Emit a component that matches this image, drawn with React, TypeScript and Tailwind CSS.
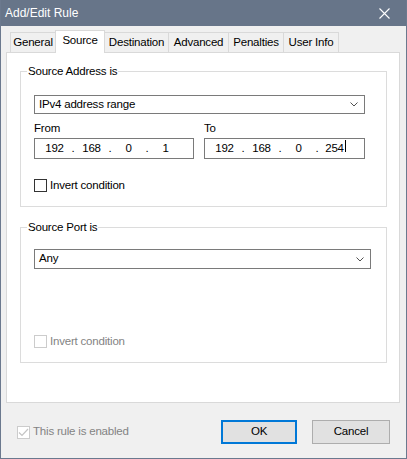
import React from "react";

const font = { fontFamily: '"Liberation Sans", Arial, sans-serif' };

function Chevron() {
  return (
    <svg width="8" height="5" viewBox="0 0 8 5" className="shrink-0">
      <polyline points="0.5,0.5 4,4 7.5,0.5" fill="none" stroke="#505050" strokeWidth="1" />
    </svg>
  );
}

function Select({ value, className }: { value: string; className: string }) {
  return (
    <div className={`flex items-center justify-between border border-[#7a7a7a] bg-white pl-[4px] pr-[6px] ${className}`}>
      <span className="leading-none">{value}</span>
      <Chevron />
    </div>
  );
}

function IpBox({ parts, caret, className }: { parts: string[]; caret?: boolean; className: string }) {
  return (
    <div className={`flex h-[21px] items-center border border-[#7a7a7a] bg-white pl-[3px] ${className}`}>
      {parts.map((p, i) => (
        <React.Fragment key={i}>
          {i > 0 && <span className="w-[4px] text-center">.</span>}
          <span className="relative flex w-[33px] justify-center">
            {p}
            {caret && i === parts.length - 1 && (
              <span className="ml-[1px] inline-block h-[12px] w-px bg-black" />
            )}
          </span>
        </React.Fragment>
      ))}
    </div>
  );
}

function Checkbox({ label, disabled, checked }: { label: string; disabled?: boolean; checked?: boolean }) {
  return (
    <div className="flex items-center">
      <span
        className={`flex h-[13px] w-[13px] items-center justify-center border bg-white ${
          disabled ? "border-[#cccccc]" : "border-[#333333]"
        }`}
      >
        {checked && (
          <svg width="11" height="9" viewBox="0 0 11 9">
            <polyline points="1,4.5 4,7.5 10,1" fill="none" stroke="#c4c4c4" strokeWidth="1.2" />
          </svg>
        )}
      </span>
      <span className={`ml-[3px] leading-none ${disabled ? "text-[#838383]" : "text-black"}`}>{label}</span>
    </div>
  );
}

const tabs = [
  { name: "General", w: "w-[46px]" },
  { name: "Source", w: "w-[50px]", active: true },
  { name: "Destination", w: "w-[65px]" },
  { name: "Advanced", w: "w-[61px]" },
  { name: "Penalties", w: "w-[56px]" },
  { name: "User Info", w: "w-[56px]" },
];

export default function App() {
  return (
    <div
      style={font}
      className="flex h-[459px] w-[407px] flex-col border-x border-b border-[#6b798e] bg-[#f0f0f0] text-[11.5px] tracking-[-0.2px] text-black"
    >
      {/* Title bar */}
      <div className="flex h-[26px] shrink-0 items-center justify-between bg-[#677589] pl-[4px] pr-[16px] text-[12px] tracking-normal text-white">
        <span>Add/Edit Rule</span>
        <svg width="11" height="11" viewBox="0 0 11 11">
          <path d="M0.5 0.5 L10.5 10.5 M10.5 0.5 L0.5 10.5" stroke="#ffffff" strokeWidth="1.1" />
        </svg>
      </div>

      <div className="flex flex-col pl-[5px] pr-[6px]">
        {/* Tabs */}
        <div className="flex h-[26px] items-end pl-[4px]">
          {tabs.map((t, i) =>
            t.active ? (
              <div
                key={t.name}
                className={`relative z-10 -mb-px -ml-px flex h-[23px] items-center justify-center border border-b-0 border-[#d9d9d9] bg-white pb-[2px] ${t.w}`}
              >
                {t.name}
              </div>
            ) : (
              <div
                key={t.name}
                className={`flex h-[20px] items-center justify-center border border-b-0 border-[#d9d9d9] bg-[#f0f0f0] pt-[1px] ${t.w} ${i > 0 ? "-ml-px" : ""}`}
              >
                {t.name}
              </div>
            )
          )}
        </div>

        {/* Tab panel */}
        <div className="flex h-[351px] flex-col border border-[#d9d9d9] bg-white pl-[13px] pt-[11px]">
          <fieldset className="w-[367px] border border-[#dcdcdc] pb-[14px] pl-[13px]">
            <legend className="ml-[-7px] px-[1px] leading-[14px]">Source Address is</legend>
            <Select value="IPv4 address range" className="mt-[17px] h-[19px] w-[331px]" />
            <div className="mt-[7px] flex w-[331px] leading-[14px]">
              <span className="w-[170px]">From</span>
              <span>To</span>
            </div>
            <div className="mt-[3px] flex w-[331px]">
              <IpBox parts={["192", "168", "0", "1"]} className="w-[160px]" />
              <IpBox parts={["192", "168", "0", "254"]} caret className="ml-[10px] w-[161px]" />
            </div>
            <div className="mt-[20px]">
              <Checkbox label="Invert condition" />
            </div>
          </fieldset>

          <fieldset className="mt-[13px] w-[367px] border border-[#dcdcdc] pb-[14px] pl-[13px]">
            <legend className="ml-[-7px] px-[1px] leading-[14px]">Source Port is</legend>
            <Select value="Any" className="mt-[15px] h-[20px] w-[337px]" />
            <div className="mt-[66px]">
              <Checkbox label="Invert condition" disabled />
            </div>
          </fieldset>
        </div>

        {/* Footer */}
        <div className="mt-[17px] flex items-center">
          <div className="ml-[11px]">
            <Checkbox label="This rule is enabled" disabled checked />
          </div>
          <div className="ml-auto flex">
            <button className="flex h-[24px] w-[76px] items-center justify-center border-2 border-[#0078d7] bg-[#e1e1e1]">
              OK
            </button>
            <button className="ml-[15px] mr-[10px] flex h-[24px] w-[78px] items-center justify-center border border-[#adadad] bg-[#e1e1e1]">
              Cancel
            </button>
          </div>
        </div>
      </div>
    </div>
  );
}
